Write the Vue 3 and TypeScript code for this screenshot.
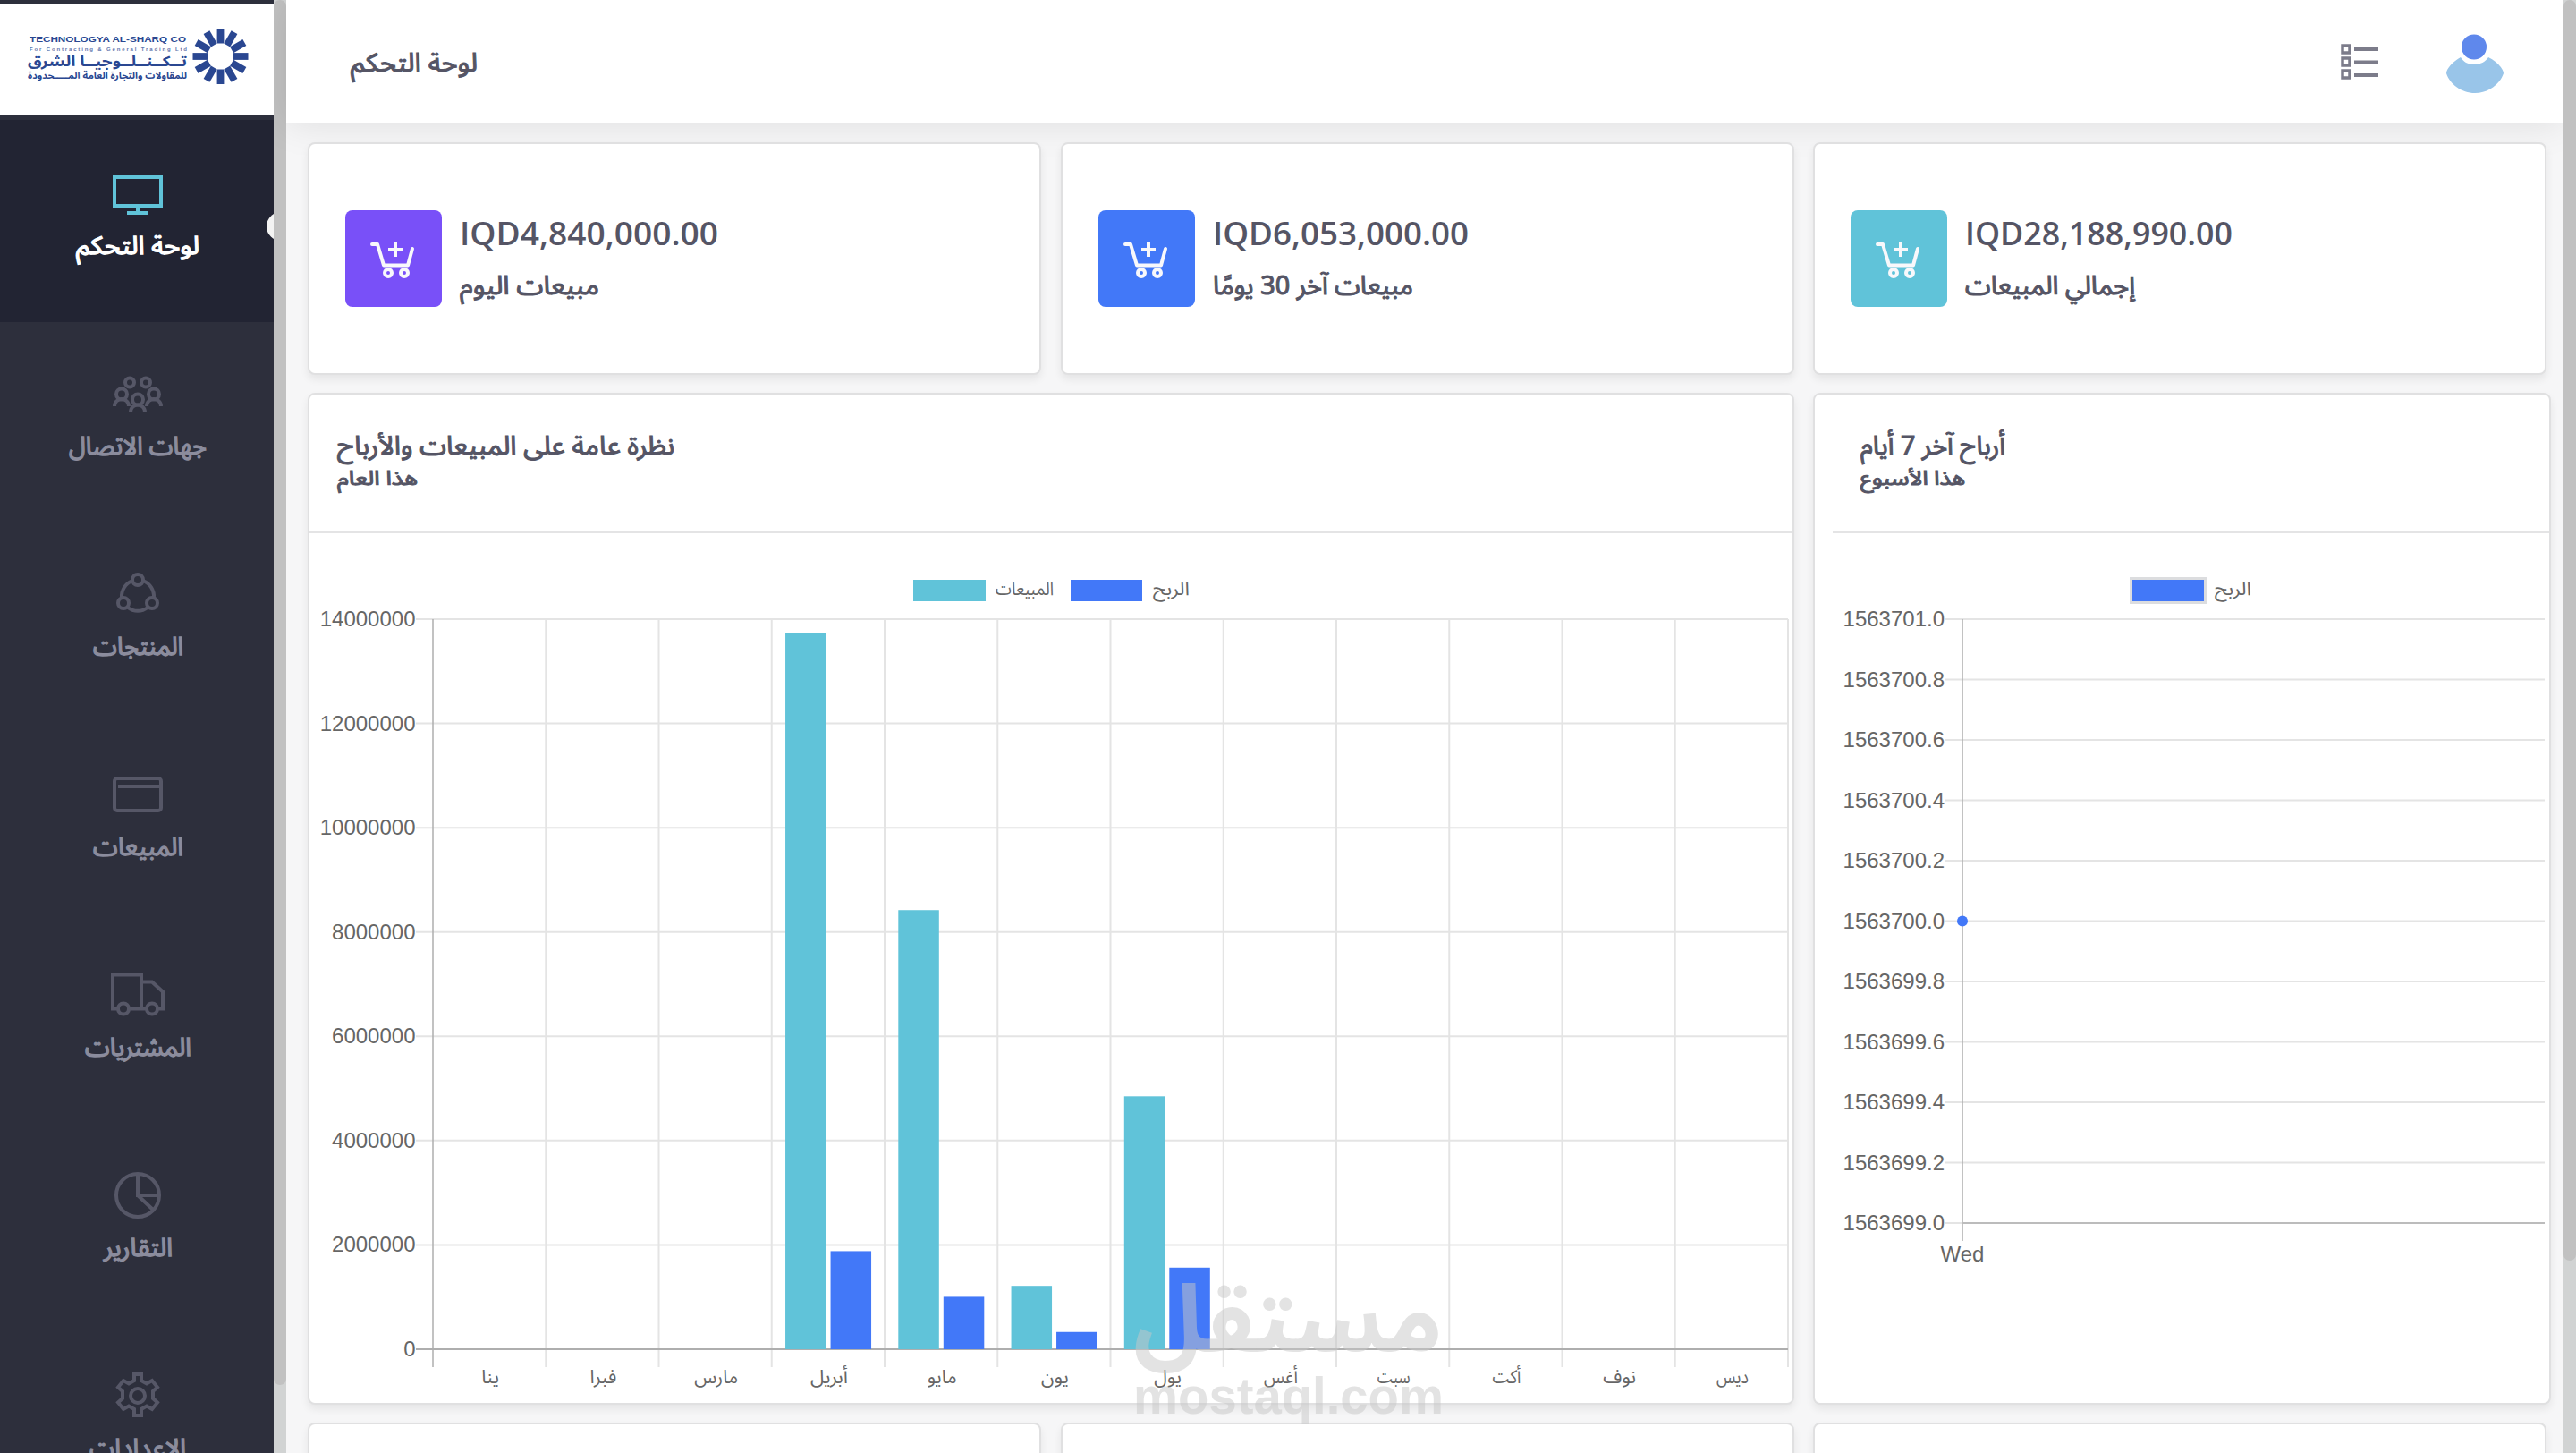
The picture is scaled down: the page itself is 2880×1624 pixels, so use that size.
<script setup lang="ts">
import { h } from 'vue'

interface FitProps {
  text: string
  width: number
  height: number
  base: number
  size: number
}

// One line of text, set to an exact advance width.
const FitText = (p: FitProps) =>
  h('svg', { width: p.width, height: p.height, viewBox: `0 0 ${p.width} ${p.height}`, style: { display: 'block', overflow: 'visible', flex: 'none' } }, [
    h('text', { x: 0, y: p.base, 'font-size': p.size, textLength: p.width, lengthAdjust: 'spacingAndGlyphs' }, p.text),
  ])
FitText.props = ['text', 'width', 'height', 'base', 'size']

const menu = [
  { id: 'home', label: 'لوحة التحكم', width: 138 },
  { id: 'contacts', label: 'جهات الاتصال', width: 154 },
  { id: 'products', label: 'المنتجات', width: 101 },
  { id: 'sales', label: 'المبيعات', width: 101 },
  { id: 'purchases', label: 'المشتريات', width: 119 },
  { id: 'reports', label: 'التقارير', width: 77 },
  { id: 'settings', label: 'الإعدادات', width: 108 },
]

const stats = [
  { value: 'IQD4,840,000.00', vw: 289, label: 'مبيعات اليوم', lw: 156, color: '#7950f8' },
  { value: 'IQD6,053,000.00', vw: 286, label: 'مبيعات آخر 30 يومًا', lw: 224, color: '#4278f8' },
  { value: 'IQD28,188,990.00', vw: 299, label: 'إجمالي المبيعات', lw: 190, color: '#60c3d9' },
]

const months = [
  { name: 'ينا', w: 20 }, { name: 'فبرا', w: 30 }, { name: 'مارس', w: 49 }, { name: 'أبريل', w: 42 },
  { name: 'مايو', w: 33 }, { name: 'يون', w: 31 }, { name: 'يول', w: 31 }, { name: 'أغس', w: 38 },
  { name: 'سبت', w: 37 }, { name: 'أكت', w: 32 }, { name: 'نوف', w: 37 }, { name: 'ديس', w: 36 },
]
const sales = [0, 0, 0, 13730000, 8420000, 1215000, 4850000, 0, 0, 0, 0, 0]
const profit = [0, 0, 0, 1880000, 1005000, 330000, 1565000, 0, 0, 0, 0, 0]

// Bar chart geometry, in the chart's own pixels.
const left = 137
const right = 1652
const top = 96
const bottom = 912
const step = (right - left) / 12
const yOf = (v: number) => bottom - (v / 14000000) * (bottom - top)
const ticks = [14, 12, 10, 8, 6, 4, 2, 0].map((m) => m * 1000000)
const bars = months.flatMap((_, i) => [
  { x: left + step * i + 15.3, y: yOf(sales[i]), v: sales[i], fill: '#60c3d9' },
  { x: left + step * i + 65.8, y: yOf(profit[i]), v: profit[i], fill: '#4278f8' },
]).filter((b) => b.v > 0)

const lineTicks = Array.from({ length: 11 }, (_, i) => ({ y: 96 + i * 67.5, label: (1563701 - i * 0.2).toFixed(1) }))
const spokes = Array.from({ length: 12 }, (_, i) => i * 30)
</script>

<template>
  <div class="app">
    <aside class="sidebar">
      <div class="logo">
        <svg width="306" height="124" viewBox="0 5 306 124">
          <g fill="#2a4791">
            <rect v-for="a in spokes" :key="a" x="242.6" y="32" width="7.8" height="16.5" :transform="`rotate(${a} 246.5 63)`" />
            <text x="33" y="47" class="latin bold" font-size="9.5" textLength="175" lengthAdjust="spacingAndGlyphs">TECHNOLOGYA AL-SHARQ CO</text>
            <text x="33" y="57" class="latin bold" font-size="6" textLength="176" lengthAdjust="spacing" fill="#5f76ad">For Contracting &amp; General Trading Ltd</text>
            <text x="31" y="74" class="bold" font-size="16" textLength="178" lengthAdjust="spacingAndGlyphs">تــكــنــلــوجيــا الشرق</text>
            <text x="31" y="88" class="bold" font-size="10.5" textLength="178" lengthAdjust="spacingAndGlyphs">للمقاولات والتجارة العامة المـــــحدودة</text>
          </g>
        </svg>
      </div>
      <nav class="menu">
        <a v-for="m in menu" :key="m.id" class="item" :class="{ active: m.id === 'home' }">
          <svg class="glyph" width="66" height="64" viewBox="0 0 66 64" fill="none" stroke="currentColor" stroke-width="4">
            <template v-if="m.id === 'home'">
              <rect x="7" y="12" width="52" height="32" />
              <path d="M33 46v6M21 52h24" />
            </template>
            <g v-else-if="m.id === 'contacts'" transform="translate(0 2.500)">
              <circle cx="24" cy="15" r="5" /><circle cx="42" cy="15" r="5" />
              <circle cx="15" cy="28" r="6" /><circle cx="51" cy="28" r="6" /><circle cx="33" cy="34" r="6" />
              <path d="M7 41.500c0-5 4-8 8-8s8 3 8 8M43 41.500c0-5 4-8 8-8s8 3 8 8M25 48c0-5 4-8 8-8s8 3 8 8" />
            </g>
            <g v-else-if="m.id === 'products'" transform="translate(0 2)">
              <circle cx="33" cy="12" r="6" /><circle cx="17" cy="38" r="6" /><circle cx="49" cy="38" r="6" />
              <path d="M27 13a19 19 0 0 0-12 19M39 13a19 19 0 0 1 12 19M22 43a18 18 0 0 0 22 0" />
            </g>
            <g v-else-if="m.id === 'sales'" transform="translate(0 2)">
              <rect x="7" y="10" width="52" height="36" rx="3" />
              <path d="M11 19h48" />
            </g>
            <g v-else-if="m.id === 'purchases'" transform="translate(0 1.500)">
              <path d="M11 44H5V6h32v38h6M23 44h14M37 14h12l12 11v19h-6" />
              <circle cx="17" cy="44" r="6" /><circle cx="49" cy="44" r="6" />
            </g>
            <template v-else-if="m.id === 'reports'">
              <circle cx="33" cy="30" r="24" />
              <path d="M33 6v24h24M33 30l17 16" />
            </template>
            <template v-else>
              <path d="M29 6h8v7l6 3.500 6-3.500 6 7.500-5 4.500v8l5 4.500-6 7.500-6-3.500-6 3.500v7h-8v-7l-6-3.500-6 3.500-6-7.500 5-4.500v-8l-5-4.500 6-7.500 6 3.500 6-3.500z" />
              <circle cx="33" cy="30" r="8" />
            </template>
          </svg>
          <FitText class="label" :text="m.label" :width="m.width" :height="48" :base="33.5" :size="28" />
        </a>
      </nav>
      <span class="knob"></span>
    </aside>
    <div class="bar"><div class="thumb side"></div></div>

    <main class="main">
      <header class="header">
        <FitText class="strong" text="لوحة التحكم" :width="142" :height="138" :base="80" :size="29" />
        <div class="tools">
          <svg width="42" height="40" viewBox="0 0 42 40" fill="none" stroke="#7c7c8a" stroke-width="4">
            <path d="M2 2h8v8H2zM2 16h8v8H2zM2 30h8v8H2z" stroke-width="3.500" />
            <path d="M15 6h27M15 20.500h27M15 35h27" />
          </svg>
          <svg class="avatar" width="64" height="66" viewBox="0 0 64 66">
            <circle cx="31" cy="14.500" r="14" fill="#5f88ec" />
            <path d="M16 26C7 31 0 39 0 44c4 12 17 22 32 22s28-10 32-22c0-5-8-14-17-18-3 5-9 8-16 8s-12-3-15-8z" fill="#99c5e9" />
          </svg>
        </div>
      </header>

      <section class="grid">
        <article v-for="s in stats" :key="s.value" class="card stat">
          <div class="tile" :style="{ background: s.color }">
            <svg width="108" height="108" viewBox="0 0 108 108" fill="none" stroke="#f8f8fb" stroke-width="4" stroke-linecap="round" stroke-linejoin="round">
              <path d="M30 38h6l7 23.500h27L75 43" />
              <path d="M56 36v16M48 44h16" stroke-linecap="butt" />
              <circle cx="48" cy="70" r="4" /><circle cx="66" cy="70" r="4" />
            </svg>
          </div>
          <div class="lines">
            <FitText class="money" :text="s.value" :width="s.vw" :height="50" :base="39" :size="36" />
            <FitText class="strong" :text="s.label" :width="s.lw" :height="58" :base="43.5" :size="29" />
          </div>
        </article>

        <article class="card wide">
          <div class="head">
            <FitText class="strong" text="نظرة عامة على المبيعات والأرباح" :width="377" :height="46" :base="37" :size="29" />
            <FitText class="strong" text="هذا العام" :width="90" :height="34" :base="24.5" :size="22" />
          </div>
          <svg class="chart" width="1656" height="970" viewBox="0 0 1656 970">
            <rect x="674" y="52" width="81" height="24" fill="#60c3d9" />
            <text x="766" y="69" textLength="65" lengthAdjust="spacingAndGlyphs" class="ar" font-size="20">المبيعات</text>
            <rect x="850" y="52" width="80" height="24" fill="#4278f8" />
            <text x="942" y="69" textLength="41" lengthAdjust="spacingAndGlyphs" class="ar" font-size="20">الربح</text>
            <g stroke="#e4e4e4" stroke-width="2">
              <path v-for="t in ticks" :key="t" :d="`M${left - 19} ${yOf(t)}H${right}`" />
              <path v-for="i in 12" :key="i" :d="`M${left + step * i} ${top}V${bottom + 20}`" />
            </g>
            <path :d="`M${left} ${top}V${bottom + 20}`" stroke="#aeaeae" stroke-width="1.500" />
            <path :d="`M${left - 19} ${bottom}H${right}`" stroke="#aeaeae" stroke-width="2" />
            <rect v-for="b in bars" :key="b.x" :x="b.x" :y="b.y" width="45.500" :height="bottom - b.y" :fill="b.fill" />
            <text v-for="t in ticks" :key="t" class="num" :x="left - 19.500" :y="yOf(t) + 8" text-anchor="end">{{ t }}</text>
            <text v-for="(m, i) in months" :key="m.name" class="ar" font-size="21" :x="left + step * (i + 0.5) - m.w / 2 + 1" y="950" :textLength="m.w" lengthAdjust="spacingAndGlyphs">{{ m.name }}</text>
          </svg>
        </article>

        <article class="card week">
          <div class="head">
            <FitText class="strong" text="أرباح آخر 7 أيام" :width="162" :height="46" :base="37" :size="29" />
            <FitText class="strong" text="هذا الأسبوع" :width="117" :height="34" :base="24.5" :size="22" />
          </div>
          <svg class="chart" width="798" height="970" viewBox="0 0 798 970">
            <rect x="333.500" y="50.500" width="83" height="27" fill="#4278f8" stroke="#dcdddf" stroke-width="3" />
            <text x="427" y="69" textLength="41" lengthAdjust="spacingAndGlyphs" class="ar" font-size="20">الربح</text>
            <path v-for="t in lineTicks" :key="t.label" :d="`M125 ${t.y}H796`" stroke="#e4e4e4" stroke-width="2" />
            <path d="M145 96V791" fill="none" stroke="#aeaeae" stroke-width="1.500" />
            <path d="M145 771H796" fill="none" stroke="#bcbcbc" stroke-width="2" />
            <circle cx="145" cy="433.500" r="6" fill="#4278f8" />
            <text v-for="t in lineTicks" :key="t.label" class="num" x="125" :y="t.y + 8" text-anchor="end">{{ t.label }}</text>
            <text class="num" x="145" y="814" text-anchor="middle">Wed</text>
          </svg>
        </article>

        <article v-for="n in 3" :key="n" class="card next"></article>
      </section>
    </main>
    <div class="bar"><div class="thumb page"></div></div>

    <svg class="watermark" width="350" height="180" viewBox="0 0 350 180">
      <text x="0" y="90" font-size="104" textLength="346" lengthAdjust="spacingAndGlyphs" class="bold">مستقل</text>
      <text x="0" y="160" font-size="57" textLength="347" lengthAdjust="spacingAndGlyphs" class="latin bold">mostaql.com</text>
    </svg>
  </div>
</template>

<style>
body { margin: 0; overflow: hidden; }
</style>

<style scoped>
.app {
  display: flex;
  position: relative;
  width: 2880px;
  height: 1624px;
  overflow: hidden;
  background: #f6f6f7;
  color: #555565;
  fill: #555565;
  font-family: "Noto Sans Arabic", "DejaVu Sans", sans-serif;
}
.bold { font-weight: 700; }
.latin { font-family: "Liberation Sans", Arial, sans-serif; }
.sidebar {
  position: relative;
  width: 306px;
  flex: none;
  overflow: hidden;
  background: #2d2f3c;
}
.logo { height: 124px; margin-top: 5px; background: #fff; }
.logo svg { display: block; }
.menu { display: flex; flex-direction: column; margin-top: 5px; }
.item {
  height: 224px;
  box-sizing: border-box;
  padding: 52px 0 0 2px;
  display: flex;
  flex: none;
  flex-direction: column;
  align-items: center;
  color: #565767;
}
.item.active { height: 226px; margin-bottom: -2px; background: #222433; color: #60c3d9; }
.glyph { display: block; }
.label { fill: #8b8c9d; stroke: #8b8c9d; stroke-width: 1.3px; }
.active .label { fill: #fff; stroke: #fff; }
.knob {
  position: absolute;
  left: 298px;
  top: 237px;
  width: 32px;
  height: 32px;
  border-radius: 50%;
  background: #f3f3f3;
}
.bar { width: 14px; flex: none; background: #d1d3d3; }
.thumb { background: #c1c1c1; border-radius: 7px; }
.side { height: 1548px; }
.page { height: 1409px; }
.main { flex: 1; min-width: 0; display: flex; flex-direction: column; }
.header {
  height: 138px;
  flex: none;
  box-sizing: border-box;
  padding: 0 67px 0 72px;
  display: flex;
  align-items: center;
  justify-content: space-between;
  background: #fff;
  box-shadow: 0 0 40px rgba(0, 0, 0, 0.1);
}
.tools { display: flex; align-items: center; gap: 76px; }
.avatar { margin-top: 4px; }
.strong { fill: #555565; stroke: #555565; stroke-width: 1.1px; }
.money { font-family: "Open Sans", "Noto Sans", sans-serif; font-weight: 600; }
.grid {
  display: grid;
  grid-template-columns: repeat(3, 820px);
  grid-template-rows: 260px 1131px 260px;
  gap: 20px 21.5px;
  padding: 21px 0 0 24px;
}
.card {
  box-sizing: border-box;
  border: 2px solid #e0e0e1;
  border-radius: 8px;
  background: #fff;
  box-shadow: 0 5px 10px rgba(0, 0, 0, 0.07);
}
.stat { display: flex; gap: 20px; padding: 74px 0 0 40px; }
.tile { width: 108px; height: 108px; flex: none; border-radius: 8px; }
.tile svg { display: block; }
.lines { display: flex; flex-direction: column; }
.wide { grid-column: span 2; }
.head {
  height: 155px;
  box-sizing: border-box;
  padding: 30px 0 0 31px;
  border-bottom: 2px solid #e4e4e5;
}
.wide .chart { margin-left: 1px; }
.week { width: 825px; }
.week .head { margin-left: 20px; }
.week .chart { margin-left: 20px; }
.chart { display: block; }
.ar { fill: #666; }
.num { font-family: "Liberation Sans", Arial, sans-serif; font-size: 24px; fill: #666; }
.watermark {
  position: absolute;
  left: 1267px;
  top: 1420px;
  fill: #c8c8c8;
  opacity: 0.5;
  overflow: visible;
}
</style>
